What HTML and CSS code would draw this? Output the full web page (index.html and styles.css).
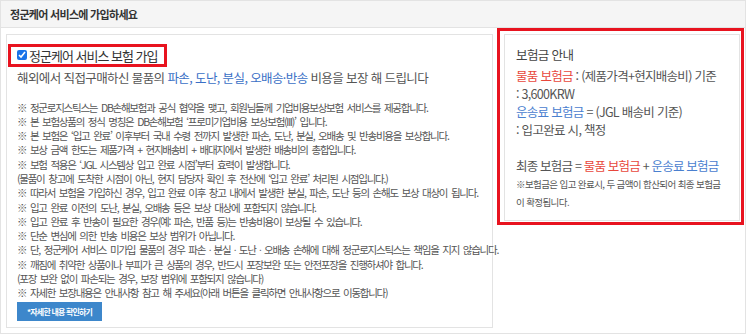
FILE: index.html
```html
<!DOCTYPE html>
<html lang="ko">
<head>
    <meta charset="UTF-8">
    <meta name="viewport" content="width=device-width, initial-scale=1.0">
    <title>정군케어 서비스</title>
    <link rel="stylesheet" href="styles.css">
</head>
<body>

    <div class="panel">
        <div class="panel-head">정군케어 서비스에 가입하세요</div>

        <div class="panel-body">
            <div class="care-box">
                <label class="pick">
                    <input type="checkbox" checked>
                    <span>정군케어 서비스 보험 가입</span>
                </label>

                <p class="lead">해외에서 직접구매하신 물품의 <span class="hl">파손, 도난, 분실, 오배송·반송</span> 비용을 보장 해 드립니다</p>

                <div class="notes">
                    <p>※ 정군로지스틱스는 DB손해보험과 공식 협약을 맺고, 회원님들께 기업비용보상보험 서비스를 제공합니다.</p>
                    <p>※ 본 보험상품의 정식 명칭은 DB손해보험 ‘프로미기업비용 보상보험(III)’ 입니다.</p>
                    <p>※ 본 보험은 ‘입고 완료’ 이후부터 국내 수령 전까지 발생한 파손, 도난, 분실, 오배송 및 반송비용을 보상합니다.</p>
                    <p>※ 보상 금액 한도는 제품가격 + 현지배송비 + 배대지에서 발생한 배송비의 총합입니다.</p>
                    <p>※ 보험 적용은 ‘JGL 시스템상 입고 완료 시점’부터 효력이 발생합니다.</p>
                    <p>(물품이 창고에 도착한 시점이 아닌, 현지 담당자 확인 후 전산에 ‘입고 완료’ 처리된 시점입니다.)</p>
                    <p>※ 따라서 보험을 가입하신 경우, 입고 완료 이후 창고 내에서 발생한 분실, 파손, 도난 등의 손해도 보상 대상이 됩니다.</p>
                    <p>※ 입고 완료 이전의 도난, 분실, 오배송 등은 보상 대상에 포함되지 않습니다.</p>
                    <p>※ 입고 완료 후 반송이 필요한 경우(예: 파손, 반품 등)는 반송비용이 보상될 수 있습니다.</p>
                    <p>※ 단순 변심에 의한 반송 비용은 보상 범위가 아닙니다.</p>
                    <p>※ 단, 정군케어 서비스 미가입 물품의 경우 파손ㆍ분실ㆍ도난ㆍ오배송 손해에 대해 정군로지스틱스는 책임을 지지 않습니다.</p>
                    <p>※ 깨짐에 취약한 상품이나 부피가 큰 상품의 경우, 반드시 포장보완 또는 안전포장을 진행하셔야 합니다.</p>
                    <p>(포장 보완 없이 파손되는 경우, 보장 범위에 포함되지 않습니다)</p>
                    <p>※ 자세한 보장내용은 안내사항 참고 해 주세요(아래 버튼을 클릭하면 안내사항으로 이동합니다)</p>
                </div>

                <button class="more-btn">*자세한 내용 확인하기</button>
            </div>

            <div class="mark">
                <div class="info-box">
                    <h3>보험금 안내</h3>
                    <p><span class="red">물품 보험금</span> : (제품가격+현지배송비) 기준</p>
                    <p>: 3,600KRW</p>
                    <p><span class="blue">운송료 보험금</span> = (JGL 배송비 기준)</p>
                    <p>: 입고완료 시, 책정</p>
                    <p class="total">최종 보험금 = <span class="red">물품 보험금</span> + <span class="blue">운송료 보험금</span></p>
                    <p class="small">※보험금은 입고 완료시, 두 금액이 합산되어 최종 보험금<br>이 확정됩니다.</p>
                </div>
            </div>
        </div>
    </div>

</body>
</html>
```

FILE: styles.css
```css
body {
    margin: 0;
    background-color: white;
    font-family: "Noto Sans CJK KR", "Noto Sans", sans-serif;
    color: #555;
}
p {
    margin: 0;
}
.panel {
    width: 746px;
    box-sizing: border-box;
    border: 1px solid #e3e3e3;
}
.panel-head {
    height: 26px;
    line-height: 26px;
    padding-left: 9px;
    background-color: #f5f5f5;
    border-bottom: 1px solid #e3e3e3;
    font-size: 11px;
    font-weight: bold;
    letter-spacing: -0.7px;
    color: #333;
}
.panel-body {
    display: flex;
    align-items: flex-start;
    padding: 0 1px 5px 5px;
}
.care-box {
    width: 487px;
    box-sizing: border-box;
    margin-top: 6px;
    padding: 6px 10px 6px 10px;
    border: 1px solid #e3e3e3;
}
.pick {
    display: inline-flex;
    align-items: center;
    margin-left: -9px;
    padding: 0 7px 0 6px;
    height: 17px;
    border: 3px solid #e8131f;
    font-size: 13px;
    letter-spacing: -1px;
    color: #333;
}
.pick input {
    width: 10px;
    height: 10px;
    margin: 0 2px 0 0;
    accent-color: #1a73e8;
}
.lead {
    margin-top: 1px;
    margin-bottom: 13px;
    line-height: 20px;
    font-size: 12.5px;
    letter-spacing: -0.6px;
    color: #555;
}
.hl {
    color: #3a6fc6;
}
.notes p {
    line-height: 14.3px;
    font-size: 10.5px;
    letter-spacing: -1.25px;
    word-spacing: 2px;
    white-space: nowrap;
    color: #555;
}
.more-btn {
    display: block;
    margin-top: 1px;
    height: 19px;
    padding: 0 10px;
    border: none;
    background-color: #3d87cb;
    color: white;
    font-family: inherit;
    font-size: 8px;
    font-weight: bold;
    letter-spacing: -0.8px;
    cursor: pointer;
}
.mark {
    width: 248px;
    box-sizing: border-box;
    margin-left: 4px;
    padding: 3px 1px 1px 4px;
    border: 3px solid #e8131f;
}
.info-box {
    padding: 11px 10px 9px 11px;
    border: 1px solid #e3e3e3;
    background-color: white;
}
.info-box h3 {
    margin: 0 0 3px 0;
    line-height: 18px;
    font-size: 12.5px;
    font-weight: normal;
    letter-spacing: -0.6px;
    color: #444;
}
.info-box p {
    line-height: 18px;
    font-size: 12.5px;
    letter-spacing: -0.7px;
    white-space: nowrap;
}
.info-box .total {
    margin-top: 18px;
    font-size: 12.5px;
    letter-spacing: -0.8px;
}
.info-box .small {
    line-height: 18px;
    font-size: 9.5px;
    letter-spacing: -0.6px;
}
.red {
    color: #e8473c;
}
.blue {
    color: #4a80cf;
}
```
